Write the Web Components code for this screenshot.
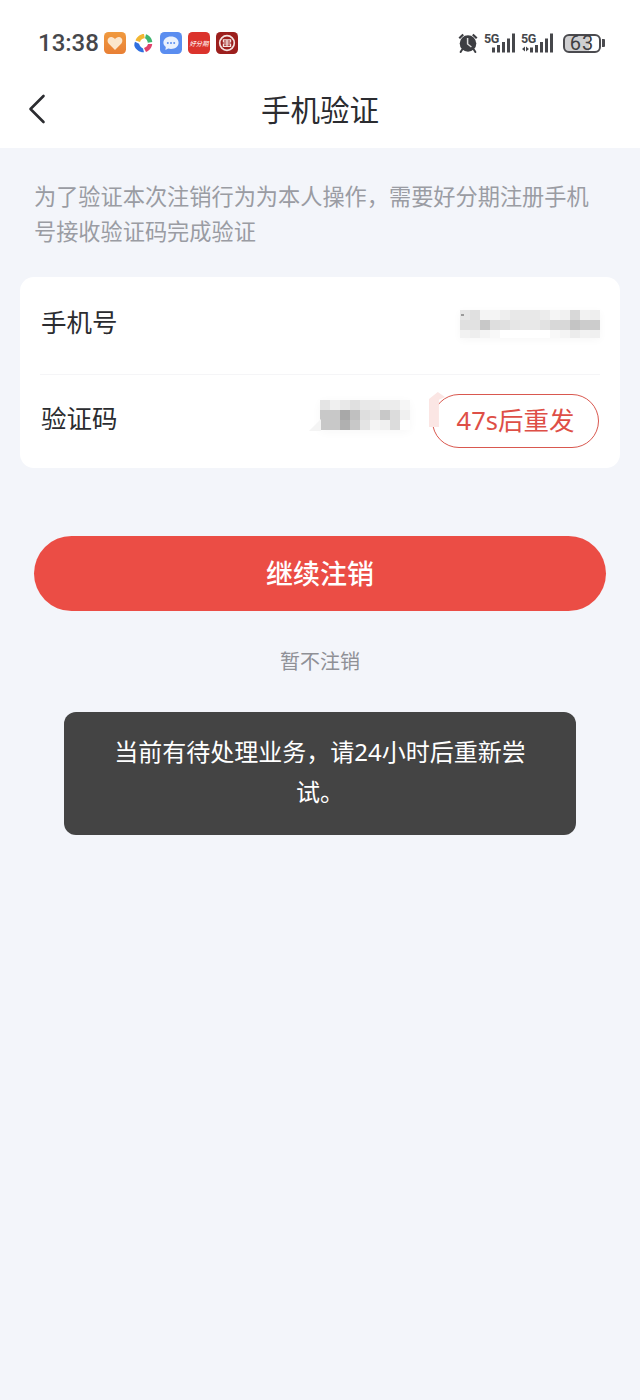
<!DOCTYPE html>
<html lang="zh">
<head>
<meta charset="utf-8">
<title>手机验证</title>
<style>
html,body{margin:0;padding:0;background:#f3f5fa;}
body{width:640px;height:1400px;overflow:hidden;font-family:"Noto Sans CJK SC","Noto Sans",sans-serif;}
</style>
</head>
<body>
<verify-page>
  <status-bar slot="status"></status-bar>
  <nav-header slot="header">手机验证</nav-header>
  <span slot="desc">为了验证本次注销行为为本人操作，需要好分期注册手机号接收验证码完成验证</span>
  <form-card slot="card">
    <form-row label="手机号">
      <mosaic-block class="phone" cells="e6,e0,f4,f4,ee,e8,e8,e8,ec,f5,f1,d8,f2,ee|e0,e2,c8,de,e0,e6,e8,e8,e2,d8,d8,c4,cc,cc|f2,ee,f4,f8,ff,ff,ff,ff,ff,f8,f4,ec,f2,f0" heights="10,10,8"></mosaic-block>
    </form-row>
    <form-row label="验证码" last>
      <mosaic-block class="code" cells="e4,f0,e8,e0,e8,e8,ec,ec,f6|c8,c8,a8,c0,de,e4,c8,dc,f0|c8,c8,b0,c8,e4,f4,f0,dc,ff" heights="10,10,10"></mosaic-block>
      <resend-pill>47s后重发</resend-pill>
    </form-row>
  </form-card>
  <primary-button slot="action">继续注销</primary-button>
  <span slot="skip">暂不注销</span>
  <toast-box slot="toast">当前有待处理业务，请24小时后重新尝试。</toast-box>
</verify-page>

<script>
function define(name, html, init){
  customElements.define(name, class extends HTMLElement{
    constructor(){super();this.attachShadow({mode:'open'}).innerHTML=html;}
    connectedCallback(){ if(init) init(this); }
  });
}

define('verify-page', `
<style>
:host{display:block;position:relative;width:640px;height:1400px;background:#f3f5fa;}
.top{background:#fff;}
.desc{padding:30px 34px 0 34px;font-size:22.2px;line-height:35px;color:#9a9ca3;box-sizing:border-box;height:129px;}
.card{padding:0 20px;}
.action{padding:68px 34px 0;}
.skip{margin-top:36px;text-align:center;font-size:20px;line-height:28px;color:#8f9096;}
</style>
<div class="top"><slot name="status"></slot><slot name="header"></slot></div>
<div class="desc"><slot name="desc"></slot></div>
<div class="card"><slot name="card"></slot></div>
<div class="action"><slot name="action"></slot></div>
<div class="skip"><slot name="skip"></slot></div>
<slot name="toast"></slot>
`);

define('status-bar', `
<style>
:host{display:flex;align-items:center;height:74px;padding:12px 35px 0 38px;box-sizing:border-box;background:#fff;}
.time{font:500 24px/30px Roboto,"Noto Sans",sans-serif;color:#46474b;letter-spacing:0;width:66px;white-space:nowrap;}
.apps{display:flex;gap:6px;}
.apps svg{display:block;width:22px;height:22px;}
.sys{margin-left:auto;display:flex;align-items:center;}
.sys svg{display:block;}
.g{position:relative;height:22px;}
.g span{position:absolute;left:0;top:0;font:700 12.5px/13px Roboto,sans-serif;color:#46474b;letter-spacing:-.3px;white-space:nowrap;}
.batt{position:relative;box-sizing:border-box;width:38px;height:19px;border:2px solid #4b4b4f;border-radius:6px;background:linear-gradient(90deg,#cfcfd1 72%,#fff 72%);display:flex;align-items:center;justify-content:center;font:400 20px/15px Roboto,"Noto Sans",sans-serif;color:#3f3f43;letter-spacing:1px;}
.nub{width:3px;height:8px;background:#4b4b4f;border-radius:0 1px 1px 0;margin-left:1px;}
</style>
<div class="time">13:38</div>
<div class="apps">
  <svg viewBox="0 0 22 22"><defs><linearGradient id="o" x1="0" y1="0" x2="0" y2="1"><stop offset="0" stop-color="#f09a3f"/><stop offset="1" stop-color="#e87f35"/></linearGradient></defs><rect width="22" height="22" rx="4.500" fill="url(#o)"/><path d="M11 18 L4.600 11.400 C2.600 9 3.800 5.200 7 5 C8.800 4.900 10.200 5.900 11 7.200 C11.800 5.900 13.200 4.900 15 5 C18.200 5.200 19.400 9 17.400 11.400Z" fill="#fbe6cc"/></svg>
  <svg viewBox="0 0 22 22"><rect width="22" height="22" rx="4.500" fill="#fff"/><path d="M3.500 8.500 C5 4.500 8.500 2 12 2 L12.800 6.300 C10.500 6.300 8.800 7.500 8 10Z" fill="#f2b632"/><path d="M14 2.300 C17.500 3.400 20 6.500 20.300 10 L15.800 10.800 C15.500 8.800 14.500 7.200 13 6.300Z" fill="#3fb56f"/><path d="M20.200 12 C19.800 15.800 17 19 14 20 L12 16 C14 15.300 15.600 14 16 12Z" fill="#e0426b"/><path d="M12 20.300 C7.500 20.500 3.400 17.500 2.300 13.500 C2.200 12 2.500 10.800 3 9.800 L7 11.800 C7.500 14 9.500 16 11 16.500Z" fill="#2f6fe0"/></svg>
  <svg viewBox="0 0 22 22"><rect width="22" height="22" rx="4.500" fill="#5a8df0"/><path d="M11 4.500 C15.400 4.500 18.600 7.200 18.600 10.800 C18.600 14.400 15.400 17 11 17 C10 17 9 16.900 8.200 16.600 L5.400 18 L5.800 15 C4.300 13.800 3.400 12.400 3.400 10.800 C3.400 7.200 6.600 4.500 11 4.500Z" fill="#eaf1fd"/><circle cx="7.800" cy="11" r="1" fill="#5a8df0"/><circle cx="11" cy="11" r="1" fill="#5a8df0"/><circle cx="14.200" cy="11" r="1" fill="#5a8df0"/></svg>
  <svg viewBox="0 0 22 22"><rect width="22" height="22" rx="4.500" fill="#db332c"/><text x="11" y="13.500" text-anchor="middle" font-family="Noto Sans CJK SC,sans-serif" font-size="6.300" font-style="italic" font-weight="500" fill="#fbe4e1">好分期</text></svg>
  <svg viewBox="0 0 22 22"><rect width="22" height="22" rx="4.500" fill="#9c1f1d"/><circle cx="11" cy="11" r="7.300" fill="none" stroke="#f4e2df" stroke-width="1.700"/><path d="M7.400 7.800 H14.600 V10 H7.400Z M7.400 12 H14.600 V14.400 H7.400Z M11 7.800 V14.400" fill="none" stroke="#f4e2df" stroke-width="1.200"/></svg>
</div>
<div class="sys">
  <svg width="22" height="22" viewBox="0 0 22 22" style="margin-right:5px"><path d="M1.500 5.500 L5.500 1.800 L7 3.200 L3 7Z M20.500 5.500 L16.500 1.800 L15 3.200 L19 7Z" fill="#3d3e42"/><path d="M5.200 17.500 L3.600 20 M16.800 17.500 L18.400 20" stroke="#3d3e42" stroke-width="2" stroke-linecap="round"/><circle cx="11" cy="11.500" r="8.300" fill="#3d3e42"/><path d="M10.600 6 V12 L14.400 15" fill="none" stroke="#dcdcdc" stroke-width="1.500"/></svg>
  <div class="g" style="margin-right:5px"><svg width="32" height="22" viewBox="0 0 32 22"><rect x="8" y="15.500" width="3" height="5" fill="#46474b"/><rect x="13" y="13" width="3" height="7.500" fill="#46474b"/><rect x="18" y="10" width="3" height="10.500" fill="#46474b"/><rect x="23" y="6.500" width="3" height="14" fill="#46474b"/><rect x="28" y="1.500" width="3" height="19" fill="#46474b"/></svg><span>5G</span></div>
  <div class="g" style="margin-right:9px"><svg width="33" height="22" viewBox="0 0 33 22"><path d="M1 17 L4 14.500 V19.500Z M8 17 L5 14.500 V19.500Z" fill="#46474b"/><rect x="9" y="15.500" width="3" height="5" fill="#46474b"/><rect x="14" y="13" width="3" height="7.500" fill="#46474b"/><rect x="19" y="10" width="3" height="10.500" fill="#46474b"/><rect x="24" y="6.500" width="3" height="14" fill="#46474b"/><rect x="29" y="1.500" width="3" height="19" fill="#46474b"/></svg><span>5G</span></div>
  <div class="batt">63</div><div class="nub"></div>
</div>
`);

define('nav-header', `
<style>
:host{display:block;position:relative;height:74px;background:#fff;text-align:center;font-size:29.5px;line-height:68px;color:#2b2c30;}
svg{position:absolute;left:28px;top:20px;}
</style>
<svg width="18" height="30" viewBox="0 0 18 30"><path d="M15.500 2 L2.500 15 L15.500 28" fill="none" stroke="#2b2c30" stroke-width="2.600" stroke-linecap="round" stroke-linejoin="round"/></svg>
<slot></slot>
`);

define('form-card', `
<style>
:host{display:block;background:#fff;border-radius:14px;padding:0 20px 0 22px;height:191px;box-sizing:border-box;}
</style>
<slot></slot>
`);

define('form-row', `
<style>
:host{display:flex;align-items:center;box-sizing:border-box;height:98px;position:relative;color:#2b2c30;border-bottom:1px solid #f5f5f7;margin-left:-2px;padding-left:1px;}
:host([last]){border-bottom:none;height:94px;}
.label{font-size:25.500px;line-height:30px;margin-bottom:10px;}
:host([last]) .label{margin-bottom:10px;}
.value{margin-left:auto;display:flex;align-items:center;}
</style>
<div class="label"></div>
<div class="value"><slot></slot></div>
`, el=>{ el.shadowRoot.querySelector('.label').textContent = el.getAttribute('label'); });

define('mosaic-block', `
<style>
:host{display:block;position:relative;}
#m{box-shadow:0 2px 9px rgba(0,0,0,.035);}
.r{display:flex;}
.c{width:10px;}
.smear{position:absolute;left:-11px;top:19px;width:12px;height:12px;background:#f4f4f4;clip-path:polygon(100% 0,100% 100%,0 100%);}
.dot{position:absolute;left:1px;top:4px;width:3px;height:2px;background:#9a9a9a;}
</style>
<div id="m"></div>
`, el=>{
  const hs=(el.getAttribute('heights')||'').split(',');
  const m=el.shadowRoot.getElementById('m');
  el.getAttribute('cells').split('|').forEach((row,i)=>{
    const r=document.createElement('div');r.className='r';
    row.split(',').forEach(v=>{
      const c=document.createElement('div');c.className='c';
      c.style.height=hs[i]+'px';c.style.background='#'+v+v+v;
      r.appendChild(c);
    });
    m.appendChild(r);
  });
  const extra=document.createElement('div');
  if(el.classList.contains('code')){
    el.style.marginRight='22px'; el.style.marginBottom='14px';
    extra.className='smear';
  } else {
    el.style.marginBottom='3px';
    extra.className='dot';
  }
  el.shadowRoot.appendChild(extra);
});

define('resend-pill', `
<style>
:host{display:inline-flex;position:relative;align-items:center;justify-content:center;box-sizing:border-box;width:167px;height:54px;margin:0 1px 2px 0;border:1.500px solid #d9584f;border-radius:27px;color:#de4f47;font:400 25.500px/30px "Noto Sans","Noto Sans CJK SC",sans-serif;}
.ghost{position:absolute;left:-4px;top:-3px;width:16px;height:35px;background:#fbe6e4;clip-path:polygon(0 20%,55% 0,100% 14%,62% 22%,62% 100%,0 100%);}
span{position:relative;top:-1px;}
</style>
<div class="ghost"></div>
<span><slot></slot></span>
`);

define('primary-button', `
<style>
:host{display:flex;align-items:center;justify-content:center;height:75px;border-radius:38px;background:#eb4d45;color:#fff;font-size:27px;font-weight:500;padding-bottom:3px;box-sizing:border-box;}
</style>
<slot></slot>
`);

define('toast-box', `
<style>
:host{position:absolute;left:64px;top:712px;width:512px;height:123px;box-sizing:border-box;padding:20px 48px 0;background:#444444;border-radius:12px;color:#fff;font:400 24px/40px "Noto Sans","Noto Sans CJK SC",sans-serif;text-align:center;}
</style>
<slot></slot>
`);
</script>
</body>
</html>
